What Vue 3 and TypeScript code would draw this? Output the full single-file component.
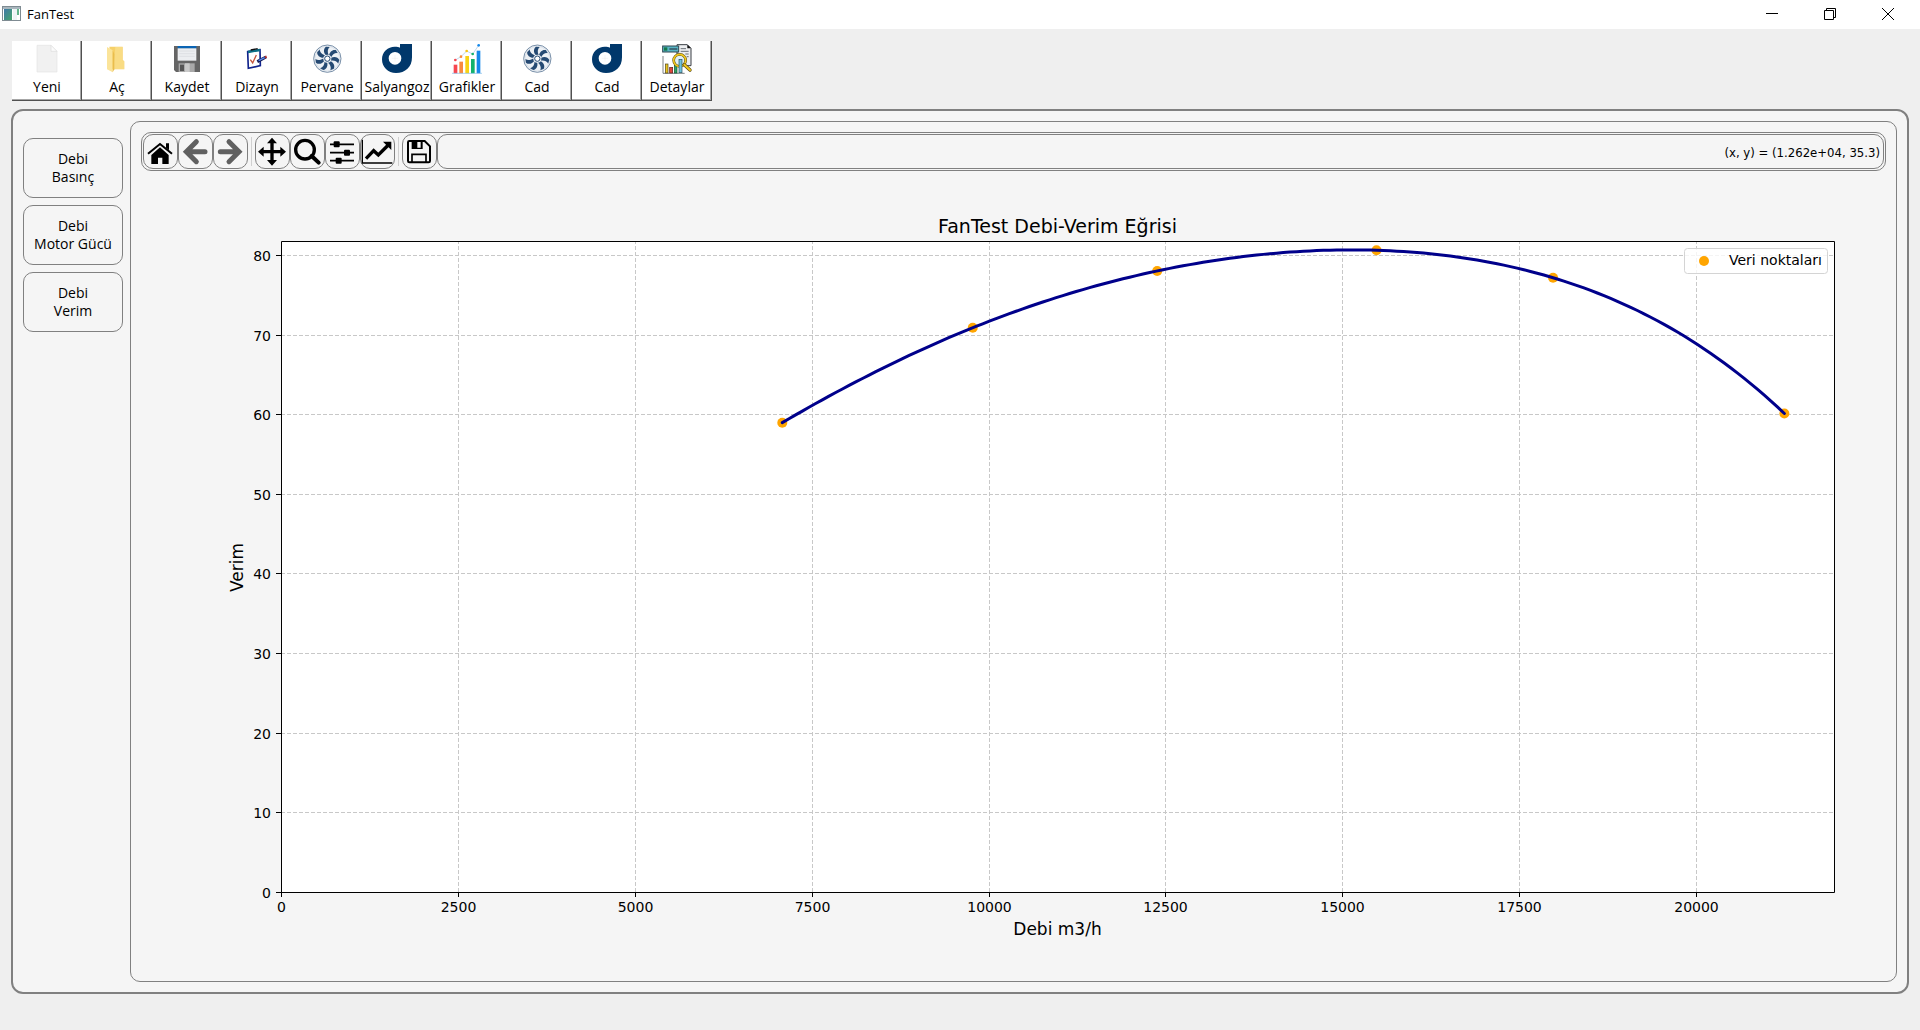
<script setup lang="ts">
import { computed, onBeforeUnmount, onMounted, ref } from 'vue'

interface Point {
  debi: number
  verim: number
}

const files = [
  { icon: 'new', label: 'Yeni' },
  { icon: 'open', label: 'Aç' },
  { icon: 'save', label: 'Kaydet' },
  { icon: 'design', label: 'Dizayn' },
  { icon: 'fan', label: 'Pervane' },
  { icon: 'volute', label: 'Salyangoz' },
  { icon: 'charts', label: 'Grafikler' },
  { icon: 'fan', label: 'Cad' },
  { icon: 'volute', label: 'Cad' },
  { icon: 'details', label: 'Detaylar' },
]

const views = [
  ['Debi', 'Basınç'],
  ['Debi', 'Motor Gücü'],
  ['Debi', 'Verim'],
]

const bladeAngles = [0, 51, 103, 154, 206, 257, 309]

const points: Point[] = [
  { debi: 7078, verim: 59 },
  { debi: 9770, verim: 70.92 },
  { debi: 12377, verim: 78.05 },
  { debi: 15477, verim: 80.65 },
  { debi: 17972, verim: 77.2 },
  { debi: 21241, verim: 60.15 },
]

const xMax = 21950
const yMax = 81.75
const margin = { top: 70, right: 52, bottom: 79, left: 140 }

const figure = ref<SVGSVGElement | null>(null)
const size = ref({ width: 1745, height: 800 })
let observer: ResizeObserver | undefined

function measure() {
  if (!figure.value) return
  const box = figure.value.getBoundingClientRect()
  size.value = { width: Math.round(box.width), height: Math.round(box.height) }
}

onMounted(() => {
  measure()
  observer = new ResizeObserver(measure)
  if (figure.value) observer.observe(figure.value)
})
onBeforeUnmount(() => observer?.disconnect())

const left = margin.left
const top = margin.top
const right = computed(() => size.value.width - margin.right)
const bottom = computed(() => size.value.height - margin.bottom)

const sx = (v: number) => left + (v / xMax) * (right.value - left)
const sy = (v: number) => bottom.value - (v / yMax) * (bottom.value - top)
// Centre one-pixel lines on the pixel grid
const crisp = (v: number) => Math.round(v) + 0.5

const xTicks = computed(() =>
  [0, 2500, 5000, 7500, 10000, 12500, 15000, 17500, 20000].map((v) => ({ v, p: crisp(sx(v)) })),
)
const yTicks = computed(() =>
  [0, 10, 20, 30, 40, 50, 60, 70, 80].map((v) => ({ v, p: crisp(sy(v)) })),
)

// Interpolating polynomial through all measured points
function verimAt(debi: number): number {
  return points.reduce((sum, p, i) => {
    const weight = points.reduce(
      (w, q, j) => (i === j ? w : (w * (debi - q.debi)) / (p.debi - q.debi)),
      1,
    )
    return sum + p.verim * weight
  }, 0)
}

const curve = computed(() => {
  const first = points[0].debi
  const last = points[points.length - 1].debi
  const steps = 150
  return Array.from({ length: steps + 1 }, (_, i) => {
    const d = first + ((last - first) * i) / steps
    return `${(sx(d) + 0.5).toFixed(2)},${(sy(verimAt(d)) + 0.5).toFixed(2)}`
  }).join(' ')
})
</script>

<template>
  <div class="window">
    <header class="titlebar">
      <svg class="app-icon" viewBox="0 0 19 15" aria-hidden="true">
        <defs>
          <linearGradient id="appGreen" x1="0" y1="0" x2="1" y2="1">
            <stop offset="0" stop-color="#3f78a8" />
            <stop offset="1" stop-color="#45a56a" />
          </linearGradient>
        </defs>
        <rect x="0.5" y="0.5" width="18" height="14" fill="#fff" stroke="#7f8b92" />
        <rect x="1" y="1" width="17" height="2" fill="#a9b6bd" />
        <rect x="2" y="3" width="8" height="11" fill="url(#appGreen)" />
        <rect x="11" y="3" width="4" height="11" fill="#eef3f5" />
        <rect x="15" y="3" width="2" height="6" fill="#63b58c" />
      </svg>
      <h1 class="title">FanTest</h1>
      <button class="win-btn" type="button" aria-label="Simge durumuna küçült">
        <svg viewBox="0 0 12 12"><path d="M0 5.5H12" /></svg>
      </button>
      <button class="win-btn" type="button" aria-label="Önceki boyut">
        <svg viewBox="0 0 12 12"><path d="M.5 2.5H9.5V11.500H.5ZM2.500 2.500V.5H11.500V9.500H9.500" /></svg>
      </button>
      <button class="win-btn" type="button" aria-label="Kapat">
        <svg viewBox="0 0 12 12"><path d="M0 0L12 12M12 0L0 12" /></svg>
      </button>
    </header>

    <nav class="files" aria-label="Araçlar">
      <button v-for="(f, i) in files" :key="i" class="file-btn" type="button">
        <svg class="file-icon" viewBox="0 0 90 90" aria-hidden="true">
          <g v-if="f.icon === 'new'">
            <path d="M15 4H57L75 22V84H15Z" fill="#f1f1f1" stroke="#e4e4e4" stroke-width="2" />
            <path d="M57 4V22H75Z" fill="#fbfbfb" stroke="#dcdcdc" stroke-width="2" />
          </g>
          <g v-else-if="f.icon === 'open'">
            <path d="M22 8H62V48L67 52V76H30Z" fill="#f6d068" />
            <path d="M40 9H61V48L66 52V75H34Z" fill="#f9dc84" />
            <path d="M15 9L32 19V85L15 76Z" fill="#fbe49a" />
            <path d="M32 19V85L37 76V30Z" fill="#e9bd4c" />
          </g>
          <g v-else-if="f.icon === 'save'">
            <path d="M6 6H84V84H12L6 78Z" fill="#656565" />
            <rect x="17" y="6" width="56" height="8" fill="#0a64b4" />
            <rect x="17" y="13" width="56" height="37" fill="#eceef1" />
            <path d="M22 21H68M22 29H68M22 37H68" stroke="#d6d9dd" stroke-width="2" />
            <rect x="20" y="58" width="48" height="26" fill="#a9a9a9" />
            <rect x="24" y="62" width="12" height="19" fill="#555" />
            <rect x="39" y="58" width="14" height="26" fill="#c9c9c9" />
          </g>
          <g v-else-if="f.icon === 'design'">
            <path d="M17 23L54 17L55 65L19 73Z" fill="#fff" stroke="#12248c" stroke-width="5" />
            <path d="M18 24L54 18" stroke="#0c6f86" stroke-width="7" />
            <path d="M26 18L47 14" stroke="#111" stroke-width="4" />
            <path d="M25 47L32 57L43 33" fill="none" stroke="#c4553c" stroke-width="4" />
            <path d="M46 53L72 39" stroke="#151b54" stroke-width="9" />
            <path d="M50 50L68 41" stroke="#5d8ff0" stroke-width="4" />
            <path d="M69 40L74 38" stroke="#b03030" stroke-width="7" />
          </g>
          <g v-else-if="f.icon === 'fan'">
            <circle cx="46" cy="44" r="41" fill="#edf1f5" stroke="#3a5a7e" stroke-width="2" />
            <circle cx="46" cy="44" r="37" fill="none" stroke="#b9c6d3" stroke-width="1" />
            <path
              v-for="a in bladeAngles"
              :key="a"
              :transform="`rotate(${a} 46 44)`"
              d="M42 34C34 26 34 14 42 8L53 9C46 15 46 25 50 33Z"
              fill="#254a73"
            />
            <circle cx="46" cy="44" r="12" fill="#edf1f5" />
            <circle cx="46" cy="44" r="8" fill="#fff" stroke="#254a73" stroke-width="3" />
          </g>
          <g v-else-if="f.icon === 'volute'">
            <path
              fill-rule="evenodd"
              d="M54 0H90V40C90 70 70 87 42 87C18 87 0 70 0 46C0 23 18 8 38 8C46 8 50 9 54 11ZM39 24A19 19 0 1 0 39 62A19 19 0 1 0 39 24Z"
              fill="#01386b"
            />
            <path d="M39 33V53M29 43H49" stroke="#e2e2e2" stroke-width="1" />
          </g>
          <g v-else-if="f.icon === 'charts'">
            <rect x="5" y="62" width="11" height="26" fill="#f7464f" />
            <rect x="22" y="53" width="11" height="35" fill="#f98a3c" />
            <rect x="40" y="36" width="11" height="52" fill="#f8d312" />
            <rect x="57" y="45" width="11" height="43" fill="#12b26b" />
            <rect x="74" y="20" width="11" height="68" fill="#1588ea" />
            <path d="M0 88H90" stroke="#7fb9ea" stroke-width="2" />
            <path d="M10 48L27 38L44 21L62 30L80 4" fill="none" stroke="#9cc4e4" stroke-width="2" />
            <circle cx="10" cy="48" r="4" fill="#f7464f" />
            <circle cx="27" cy="38" r="4" fill="#f98a3c" />
            <circle cx="44" cy="21" r="4" fill="#f8c412" />
            <circle cx="62" cy="30" r="4" fill="#12b26b" />
            <circle cx="80" cy="4" r="4" fill="#1588ea" />
          </g>
          <g v-else>
            <path d="M45 2H76L87 13V65H45Z" fill="#eceef0" stroke="#3a3f45" stroke-width="3" />
            <path d="M76 2V13H87Z" fill="#111" />
            <path d="M56 14H72M56 22H80M70 30H80M74 38H80" stroke="#6a7077" stroke-width="3" />
            <rect x="2" y="6" width="48" height="18" fill="#58b4c4" stroke="#2f4650" stroke-width="3" />
            <rect x="6" y="10" width="10" height="10" fill="#147a4a" />
            <path d="M22 15H46" stroke="#223" stroke-width="3" />
            <path d="M3 36V88H68" fill="none" stroke="#3d4248" stroke-width="2" />
            <rect x="10" y="60" width="8" height="27" fill="#e9c31c" stroke="#4d4420" stroke-width="2" />
            <rect x="23" y="70" width="9" height="17" fill="#e0453a" stroke="#58201c" stroke-width="2" />
            <rect x="37" y="64" width="8" height="23" fill="#2ea566" stroke="#17502f" stroke-width="2" />
            <circle cx="53" cy="49" r="18" fill="#dff0f5" stroke="#5a4a10" stroke-width="8" />
            <circle cx="53" cy="49" r="18" fill="none" stroke="#f0c81e" stroke-width="5" />
            <rect x="51" y="46" width="9" height="40" fill="#6fc3dc" stroke="#27505c" stroke-width="2" />
            <path d="M67 62L84 78" stroke="#5a4a10" stroke-width="10" stroke-linecap="round" />
            <path d="M67 62L84 78" stroke="#f0c81e" stroke-width="6" stroke-linecap="round" />
          </g>
        </svg>
        <span>{{ f.label }}</span>
      </button>
    </nav>

    <main class="workspace">
      <nav class="views" aria-label="Grafikler">
        <button v-for="v in views" :key="v[1]" class="view-btn" type="button">
          <span>{{ v[0] }}</span>
          <span>{{ v[1] }}</span>
        </button>
      </nav>

      <section class="plot-panel">
        <div class="plot-tools">
          <button class="tool" type="button" aria-label="Home">
            <svg viewBox="0 0 99 99">
              <path d="M48 37L74 60V87H55V68H42V87H22V60Z" />
              <path d="M12 56L48 27L84 56" fill="none" stroke="#000" stroke-width="6" />
              <path d="M66 25H75V46L66 38Z" />
            </svg>
          </button>
          <button class="tool dim" type="button" aria-label="Back">
            <svg viewBox="0 0 99 99">
              <path d="M78 50H26M52 20L22 50L52 80" fill="none" stroke-width="15" stroke-linecap="round" />
            </svg>
          </button>
          <button class="tool dim" type="button" aria-label="Forward">
            <svg viewBox="0 0 99 99">
              <path d="M19 50H71M45 20L75 50L45 80" fill="none" stroke-width="15" stroke-linecap="round" />
            </svg>
          </button>
          <i class="sep"></i>
          <button class="tool" type="button" aria-label="Pan">
            <svg viewBox="0 0 99 99">
              <path d="M48 8L63 25H53V45H73V35L90 50L73 65V55H53V75H63L48 92L33 75H43V55H23V65L6 50L23 35V45H43V25H33Z" />
            </svg>
          </button>
          <button class="tool" type="button" aria-label="Zoom">
            <svg viewBox="0 0 99 99">
              <circle cx="42" cy="44" r="28" fill="none" stroke="#000" stroke-width="10" />
              <path d="M62 63L83 83" stroke="#000" stroke-width="12" stroke-linecap="round" />
            </svg>
          </button>
          <button class="tool" type="button" aria-label="Subplots">
            <svg viewBox="0 0 99 99">
              <path d="M12 28H84M12 53H84M12 77H84" stroke="#000" stroke-width="5" />
              <rect x="23" y="19" width="18" height="18" rx="3" />
              <rect x="54" y="44" width="18" height="18" rx="3" />
              <rect x="29" y="68" width="18" height="18" rx="3" />
            </svg>
          </button>
          <button class="tool" type="button" aria-label="Customize">
            <svg viewBox="0 0 99 99">
              <path d="M4 14V84H94" fill="none" stroke="#000" stroke-width="4" />
              <path d="M15 71L38 47L52 60L82 30" fill="none" stroke="#000" stroke-width="10" />
              <path d="M66 20H91V45Z" />
            </svg>
          </button>
          <i class="sep"></i>
          <button class="tool" type="button" aria-label="Save">
            <svg viewBox="0 0 99 99">
              <path
                d="M20 18H65L81 34V78Q81 82 77 82H19Q15 82 15 78V22Q15 18 19 18Z"
                fill="none"
                stroke="#000"
                stroke-width="6"
              />
              <path fill-rule="evenodd" d="M26 18H59V42H26ZM43 20V38H53V20Z" />
              <path d="M27 82V58H69V82" fill="none" stroke="#000" stroke-width="5" />
            </svg>
          </button>
          <output class="coords">(x, y) = (1.262e+04, 35.3)</output>
        </div>

        <svg ref="figure" class="figure" role="img" aria-label="FanTest Debi-Verim Eğrisi">
          <rect :x="left" :y="top" :width="right - left" :height="bottom - top" fill="#fff" />
          <g class="grid">
            <line v-for="t in xTicks.slice(1)" :key="t.v" :x1="t.p" :x2="t.p" :y1="bottom" :y2="top" />
            <line v-for="t in yTicks.slice(1)" :key="t.v" :x1="left" :x2="right" :y1="t.p" :y2="t.p" />
          </g>
          <g class="points">
            <circle v-for="p in points" :key="p.debi" :cx="sx(p.debi) + 0.5" :cy="sy(p.verim) + 0.5" r="5" />
          </g>
          <polyline class="curve" :points="curve" />
          <g class="axis">
            <path :d="`M${crisp(left)} ${crisp(top)}H${crisp(right)}V${crisp(bottom)}H${crisp(left)}Z`" />
            <line v-for="t in xTicks" :key="t.v" :x1="t.p" :x2="t.p" :y1="bottom" :y2="bottom + 5" />
            <line v-for="t in yTicks" :key="t.v" :x1="left - 5" :x2="left" :y1="t.p" :y2="t.p" />
          </g>
          <g class="tick-text" text-anchor="middle">
            <text v-for="t in xTicks" :key="t.v" :x="t.p" :y="bottom + 20">{{ t.v }}</text>
          </g>
          <g class="tick-text" text-anchor="end">
            <text v-for="t in yTicks" :key="t.v" :x="left - 10" :y="t.p + 5">{{ t.v }}</text>
          </g>
          <text class="plot-title" text-anchor="middle" :x="(left + right) / 2" :y="top - 8">
            FanTest Debi-Verim Eğrisi
          </text>
          <text class="axis-text" text-anchor="middle" :x="(left + right) / 2" :y="bottom + 43">Debi m3/h</text>
          <text
            class="axis-text"
            text-anchor="middle"
            :transform="`translate(${left - 38} ${(top + bottom) / 2 + 1}) rotate(-90)`"
          >
            Verim
          </text>
          <g :transform="`translate(${right - 150} ${top + 7})`">
            <rect class="legend-box" x="0.5" y="0.5" width="143" height="25" rx="3" />
            <circle cx="20" cy="13" r="5" fill="orange" />
            <text class="tick-text" x="45" y="17">Veri noktaları</text>
          </g>
        </svg>
      </section>
    </main>
  </div>
</template>

<style>
body {
  margin: 0;
}
</style>

<style scoped>
.window {
  box-sizing: border-box;
  min-height: 100vh;
  display: flex;
  flex-direction: column;
  background: #efefef;
  color: #000;
  font: 14px/18px 'Open Sans', 'Noto Sans', sans-serif;
}

button {
  box-sizing: border-box;
  margin: 0;
  padding: 0;
  border: 0;
  background: none;
  color: inherit;
  font: inherit;
}

svg {
  display: block;
}

.titlebar {
  box-sizing: border-box;
  height: 29px;
  padding: 0 3px 2px 2px;
  display: flex;
  align-items: center;
  background: #fff;
}

.app-icon {
  width: 19px;
  height: 15px;
}

.title {
  flex: 1;
  margin: 0 0 0 6px;
  font-size: 13px;
  font-weight: 400;
}

.win-btn {
  width: 58px;
  height: 26px;
  display: flex;
  align-items: center;
  justify-content: center;
}

.win-btn svg {
  width: 12px;
  height: 12px;
  fill: none;
  stroke: #000;
}

.files {
  display: flex;
  margin: 12px 12px 8px;
}

.file-btn {
  width: 70px;
  height: 60px;
  display: flex;
  flex-direction: column;
  align-items: center;
  gap: 4px;
  padding-top: 3px;
  background: #fff;
  box-shadow:
    inset -1px -1px #505050,
    inset -2px -2px #a6a6a6;
  white-space: nowrap;
}

.file-icon {
  width: 30px;
  height: 30px;
  overflow: visible;
}

.workspace {
  flex: 1;
  display: flex;
  gap: 7px;
  margin: 0 11px 36px;
  padding: 10px;
  border: 2px solid #808080;
  border-radius: 12px;
  background: #f5f5f5;
}

.views {
  display: flex;
  flex-direction: column;
  gap: 7px;
  padding-top: 17px;
}

.view-btn {
  width: 100px;
  height: 60px;
  display: flex;
  flex-direction: column;
  align-items: center;
  justify-content: center;
  border: 1px solid #808080;
  border-radius: 10px;
}

.plot-panel {
  flex: 1;
  min-width: 0;
  display: flex;
  flex-direction: column;
  padding: 10px;
  border: 1px solid #808080;
  border-radius: 10px;
}

.plot-tools {
  display: flex;
  padding: 1px;
  border: 1px solid #808080;
  border-radius: 10px;
}

.tool {
  width: 35px;
  height: 35px;
  border: 1px solid #808080;
  border-radius: 10px;
}

.tool svg {
  width: 33px;
  height: 33px;
}

.dim svg {
  stroke: #606060;
}

.sep {
  width: 1px;
  margin: 3px;
  background: #d0d0d0;
}

.coords {
  flex: 1;
  padding: 3px 3px 0 0;
  border: 1px solid #808080;
  border-radius: 10px;
  font: 13px/30px 'DejaVu Sans Condensed', 'DejaVu Sans', sans-serif;
  text-align: right;
}

.figure {
  flex: 1;
  width: 100%;
  min-height: 400px;
}

.grid {
  stroke: #c8c8c8;
  stroke-dasharray: 4 2;
}

.points {
  fill: orange;
}

.curve {
  fill: none;
  stroke: #00008b;
  stroke-width: 3;
  stroke-linecap: round;
}

.axis {
  fill: none;
  stroke: #000;
}

.tick-text,
.axis-text,
.plot-title {
  font-family: 'DejaVu Sans', sans-serif;
  font-size: 14px;
}

.axis-text {
  font-size: 17px;
}

.plot-title {
  font-size: 19px;
}

.legend-box {
  fill: #fff;
  fill-opacity: 0.8;
  stroke: #d4d4d4;
}
</style>
